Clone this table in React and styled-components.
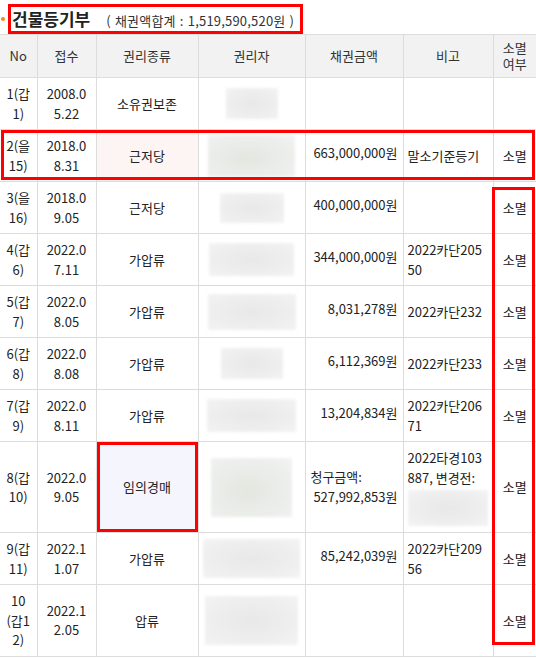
import React from 'react';
import styled, { createGlobalStyle } from 'styled-components';

const GlobalStyle = createGlobalStyle`
  body {
    margin: 0;
    background: #fff;
    overflow: hidden;
    font-family: "Noto Sans CJK KR", "Noto Sans", sans-serif;
    color: #222;
  }
`;

const rows = [
  { no: '1(갑1)', date: '2008.05.22', kind: '소유권보존', owner: [52, 31], amount: '', note: '', gone: '' },
  { no: '2(을15)', date: '2018.08.31', kind: '근저당', kindTone: 'pink', owner: [87, 42, 'green'], amount: '663,000,000원', note: '말소기준등기', gone: '소멸' },
  { no: '3(을16)', date: '2018.09.05', kind: '근저당', owner: [64, 30], amount: '400,000,000원', note: '', gone: '소멸' },
  { no: '4(갑6)', date: '2022.07.11', kind: '가압류', owner: [85, 33], amount: '344,000,000원', note: '2022카단20550', gone: '소멸' },
  { no: '5(갑7)', date: '2022.08.05', kind: '가압류', owner: [88, 36], amount: '8,031,278원', note: '2022카단232', gone: '소멸' },
  { no: '6(갑8)', date: '2022.08.08', kind: '가압류', owner: [62, 31], amount: '6,112,369원', note: '2022카단233', gone: '소멸' },
  { no: '7(갑9)', date: '2022.08.11', kind: '가압류', owner: [89, 33], amount: '13,204,834원', note: '2022카단20671', gone: '소멸' },
  { no: '8(갑10)', date: '2022.09.05', kind: '임의경매', kindTone: 'lavender', marked: true, owner: [81, 59, 'green'], claim: '527,992,853원', note: '2022타경103887, 변경전:', noteRedacted: true, gone: '소멸' },
  { no: '9(갑11)', date: '2022.11.07', kind: '가압류', owner: [97, 39], amount: '85,242,039원', note: '2022카단20956', gone: '소멸' },
  { no: '10(갑12)', date: '2022.12.05', kind: '압류', owner: [93, 49], amount: '', note: '', gone: '소멸' },
];

const tones = { pink: '#fdf4f4', lavender: '#f5f5fd' };

export default function App() {
  return (
    <>
      <GlobalStyle />
      <Page>
        <TitleBar>
          <Bullet />
          <TitleBox>
            <Title>건물등기부</Title>
            <Sum>( 채권액합계 : 1,519,590,520원 )</Sum>
          </TitleBox>
        </TitleBar>
        <Table>
          <colgroup>
            <col style={{ width: 37 }} />
            <col style={{ width: 59 }} />
            <col style={{ width: 102 }} />
            <col style={{ width: 107 }} />
            <col style={{ width: 98 }} />
            <col style={{ width: 90 }} />
            <col style={{ width: 43 }} />
          </colgroup>
          <thead>
            <tr>
              <Th>No</Th>
              <Th>접수</Th>
              <Th>권리종류</Th>
              <Th>권리자</Th>
              <Th>채권금액</Th>
              <Th>비고</Th>
              <Th>소멸<br />여부</Th>
            </tr>
          </thead>
          <tbody>
            {rows.map((r) => (
              <tr key={r.no}>
                <Td>{r.no}</Td>
                <Td>{r.date}</Td>
                <Td $tone={tones[r.kindTone]} $marked={r.marked}>{r.kind}</Td>
                <OwnerTd>
                  <Redacted $w={r.owner[0]} $h={r.owner[1]} $green={r.owner[2] === 'green'} />
                </OwnerTd>
                <AmountTd>
                  {r.claim ? (
                    <Claim>청구금액:<br />&nbsp;{r.claim}</Claim>
                  ) : (
                    r.amount
                  )}
                </AmountTd>
                <NoteTd>
                  {r.note}
                  {r.noteRedacted && <Redacted $w={80} $h={36} $top={3} />}
                </NoteTd>
                <Td>{r.gone}</Td>
              </tr>
            ))}
          </tbody>
        </Table>
        {/* 표시용 빨간 박스 */}
        <Mark $x={1} $y={130} $w={534} $h={50} />
        <Mark $x={492} $y={187} $w={43} $h={458} />
      </Page>
    </>
  );
}

const Page = styled.div`
  position: relative;
  width: 536px;
`;

const TitleBar = styled.div`
  display: flex;
  align-items: center;
  height: 34px;
  padding: 4px 0 0 1px;
  box-sizing: border-box;
`;

const Bullet = styled.span`
  width: 4px;
  height: 4px;
  border-radius: 50%;
  background: #f08a24;
  margin-right: 3px;
`;

const TitleBox = styled.div`
  display: flex;
  align-items: baseline;
  height: 30px;
  width: 295px;
  box-sizing: border-box;
  border: 3px solid #ff0000;
  padding: 0 4px 0 1px;
`;

const Title = styled.h2`
  margin: 0;
  font-size: 17px;
  line-height: 24px;
  font-weight: 700;
  color: #222;
`;

const Sum = styled.span`
  margin-left: 16px;
  font-size: 13px;
  letter-spacing: 0.2px;
  word-spacing: 1px;
  color: #333;
  white-space: nowrap;
`;

const Table = styled.table`
  width: 536px;
  table-layout: fixed;
  border-collapse: collapse;
  border-top: 1px solid #333;
  font-size: 13px;

  tr > *:first-child {
    border-left: none;
  }
  tr > *:last-child {
    border-right: none;
  }
`;

const Th = styled.th`
  background: #f2f2f2;
  color: #333;
  font-weight: 400;
  line-height: 16px;
  padding: 5px 2px;
  border: 1px solid #dcdcdc;
  text-align: center;
`;

const Td = styled.td`
  border: 1px solid #dcdcdc;
  padding: 6px 4px;
  line-height: 19.5px;
  text-align: center;
  vertical-align: middle;
  word-break: break-all;
  background: ${(p) => p.$tone || 'transparent'};
  box-shadow: ${(p) => (p.$marked ? 'inset 0 0 0 3px #ff0000' : 'none')};
  &:nth-child(2) {
    padding: 6px 8px;
  }
`;

const OwnerTd = styled(Td)`
  padding: 3px 4px;
`;

const AmountTd = styled(Td)`
  text-align: right;
  padding: 3px 5px 8px 4px;
`;

const Claim = styled.span`
  display: inline-block;
  text-align: left;
  padding-top: 4px;
`;

const NoteTd = styled(Td)`
  text-align: left;
  padding: 6px 4px;
`;

const Redacted = styled.div`
  width: ${(p) => p.$w}px;
  height: ${(p) => p.$h}px;
  margin: ${(p) => p.$top || 0}px auto 0;
  background: ${(p) =>
    p.$green
      ? 'radial-gradient(ellipse at 45% 55%, #e2e7df 0%, #ebedea 55%, #f2f2f2 100%)'
      : 'radial-gradient(ellipse at 50% 50%, #e8e8e8 0%, #eeeeee 60%, #f3f3f3 100%)'};
  filter: blur(1.5px);
`;

const Mark = styled.div`
  position: absolute;
  left: ${(p) => p.$x}px;
  top: ${(p) => p.$y}px;
  width: ${(p) => p.$w}px;
  height: ${(p) => p.$h}px;
  box-sizing: border-box;
  border: 3px solid #ff0000;
  pointer-events: none;
`;
